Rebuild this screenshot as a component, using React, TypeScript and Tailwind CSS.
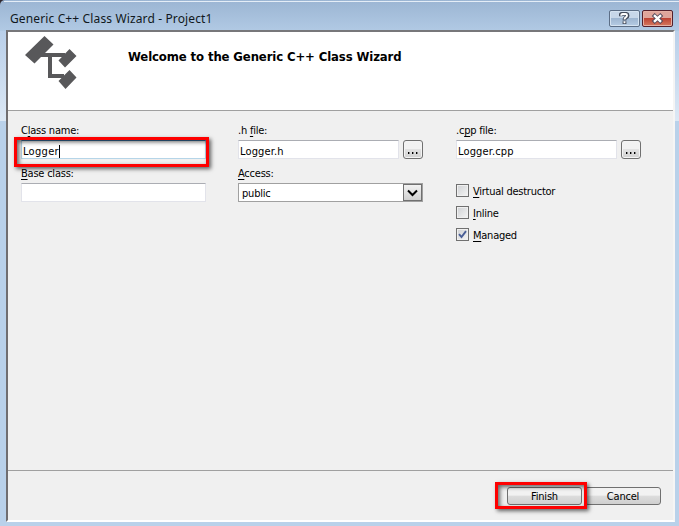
import type { ReactNode } from 'react';

function Label({ children }: { children: ReactNode }) {
  return <div className="h-[15px] whitespace-nowrap pt-px leading-[15px] tracking-[-0.22px]">{children}</div>;
}

function Key({ children }: { children: ReactNode }) {
  return <span className="underline decoration-1 underline-offset-[2px]">{children}</span>;
}

function Field({ width, children, focus }: { width: string; children?: ReactNode; focus?: boolean }) {
  return (
    <div
      className={`${width} ${focus ? 'border-[#b5d5e8] border-t-[#3d7bad]' : 'border-[#e2e3ea] border-t-[#abadb3]'} flex h-[19px] shrink-0 items-center whitespace-nowrap border bg-white pl-[1px] pt-[3px] leading-[15px] tracking-[0.15px]`}
    >
      {children}
    </div>
  );
}

function Browse() {
  return (
    <button className="flex h-[19px] w-[20px] shrink-0 items-center justify-center rounded-[3px] border border-[#707070] bg-linear-to-b from-[#f2f2f2] from-45% via-[#e2e2e2] via-50% to-[#d2d2d2] pt-[6px] shadow-[inset_0_0_0_1px_#f4f4f4]">
      <svg width="12" height="2" viewBox="0 0 12 2" shapeRendering="crispEdges">
        <path d="M1 0h1v2H1zM5 0h1v2H5zM9 0h1v2H9z" fill="#000" />
        <path d="M2 0h1v2H2zM6 0h1v2H6zM10 0h1v2h-1z" fill="#888" />
      </svg>
    </button>
  );
}

function Check({ children, checked }: { children: ReactNode; checked?: boolean }) {
  return (
    <div className="flex h-[22px] items-start gap-[4px]">
      <span className="flex size-[13px] items-center justify-center border border-[#707070] bg-linear-to-br from-[#cfd1d4] to-[#f5f5f5] shadow-[inset_0_0_0_1px_#f0f0f0]">
        {checked && (
          <svg width="9" height="9" viewBox="0 0 9 9" fill="none" stroke="#4a5f97" strokeWidth="1.9">
            <path d="M1 4.2 3.5 7 8 1.2" />
          </svg>
        )}
      </span>
      <span className="whitespace-nowrap leading-[15px] tracking-[-0.25px]">{children}</span>
    </div>
  );
}

export default function App() {
  return (
    <div className="h-[526px] w-[679px] overflow-hidden bg-[#30282f] font-['DejaVu_Sans_Condensed','DejaVu_Sans',sans-serif] text-[11px] tracking-[-0.2px] text-black [font-stretch:condensed]">
      <div className="relative flex h-[526px] flex-col rounded-tl-[5px] bg-linear-to-b from-[#9bb5d3] from-0% via-[#b9d1ea] via-8% to-[#b9d1ea] pl-[6px] pr-[4px] pt-px">
        <div className="absolute left-0 top-[31px] h-[90px] w-[6px] bg-linear-to-b from-[#b9cfe9] to-[#dce8f5]" />
        <div className="absolute right-0 top-[31px] h-[90px] w-[4px] bg-linear-to-b from-[#b9cfe9] to-[#dce8f5]" />
        <div className="absolute left-[4px] right-0 top-px h-px bg-[#e4edf7]" />
        <header className="flex h-[29px] shrink-0 items-start justify-between pl-[4px] pr-[2px]">
          <h1 className="mt-[9px] whitespace-nowrap font-['Noto_Sans',sans-serif] text-[12px] leading-[17px] tracking-[0.13px] text-[#101820]">
            Generic C++ Class Wizard - Project1
          </h1>
          <div className="mt-[9px] flex gap-[2px]">
            <button className="flex h-[17px] w-[31px] items-center justify-center rounded-[2px] border border-[#5c6e86] bg-linear-to-b from-[#c7d7e9] from-45% via-[#9eb6d1] via-50% to-[#b6cce4] shadow-[inset_0_0_0_1px_#d5e3f1]">
              <svg width="11" height="13" viewBox="0 0 11 13" fill="none" strokeLinejoin="round">
                <path d="M1.5 4.2V3Q2 1.8 3.4 1.8h3.2Q8.5 1.8 8.5 3.2v.9Q8.5 5 7 5.6 5.5 6.2 5.5 8.4M5.5 9.2v2.8" stroke="#444c5c" strokeWidth="3.8" />
                <path d="M2.2 3.8Q2.2 2 3.7 2h2.8Q8 2 8 3.3 8 4.8 6.8 5.3 5.5 6 5.5 7.6M5.5 9.2v2" stroke="#fff" strokeWidth="1.9" />
              </svg>
            </button>
            <button className="flex h-[17px] w-[31px] items-center justify-center rounded-[2px] border border-[#54202c] bg-linear-to-b from-[#dfa59b] from-45% via-[#bd4334] via-50% to-[#d5785f] shadow-[inset_0_0_0_1px_#e5b0a4]">
              <svg width="13" height="11" viewBox="0 0 13 11" fill="none">
                <path d="m2.2 1.5 8.6 8M10.8 1.5l-8.6 8" stroke="#53495a" strokeWidth="4.2" />
                <path d="m3 2.2 7 6.6M10 2.2 3 8.8" stroke="#fff" strokeWidth="2.4" />
              </svg>
            </button>
          </div>
        </header>

        <main className="flex h-[492px] w-[669px] shrink-0 flex-col border-2 border-b-[#ffffff] border-l-[#706e70] border-r-[#f5f5f5] border-t-[#77777a] bg-[#f0f0f0]">
          <section className="flex h-[79px] shrink-0 border-b border-[#a0a0a0] bg-white">
            <svg className="ml-[16px] mt-[3px] shrink-0" width="54" height="56" viewBox="0 0 54 56">
              <path d="M1 20 20.5 1 29.5 9.5 10.5 28.5ZM34.5 25.5 45.5 14 52.5 21 41 32.5ZM34.5 46 45.5 35 52.5 42.5 41.5 54Z" fill="#58585a" />
              <path d="M17 20H41M26 20V41H40" fill="none" stroke="#58585a" strokeWidth="4" />
            </svg>
            <h2 className="ml-[50px] mt-[17px] whitespace-nowrap text-[13px] font-bold leading-[16px] tracking-[-0.12px]">
              Welcome to the Generic C++ Class Wizard
            </h2>
          </section>

          <section className="grid h-[359px] shrink-0 grid-cols-[217px_218px_1fr] pl-[13px] pt-[11px]">
            <div>
              <Label>C<Key>l</Key>ass name:</Label>
              <div className="relative mt-[3px]">
                <Field width="w-[185px]" focus>
                  <span className="tracking-[0.3px]">Logger</span><span className="h-[13px] w-px bg-black" />
                </Field>
                <div className="absolute left-[-7px] top-[-3px] h-[30px] w-[195px] border-[3px] border-[#fe0000] shadow-[2px_2px_4px_#0009,inset_2px_2px_4px_#0009]" />
              </div>
              <div className="mt-[6px]"><Label><Key>B</Key>ase class:</Label></div>
              <div className="mt-[3px]"><Field width="w-[185px]" /></div>
            </div>
            <div>
              <Label>.h <Key>f</Key>ile:</Label>
              <div className="mt-[3px] flex gap-[4px]"><Field width="w-[161px]">Logger.h</Field><Browse /></div>
              <div className="mt-[6px]"><Label><Key>A</Key>ccess:</Label></div>
              <div className="mt-[3px] flex h-[19px] w-[185px] items-stretch justify-between border border-[#a0a0a0] bg-white">
                <span className="pl-[3px] pt-[2px] leading-[15px]">public</span>
                <button className="flex w-[19px] items-center justify-center border border-[#707070] bg-linear-to-b from-[#f2f2f2] to-[#d0d0d0]">
                  <svg width="11" height="8" viewBox="0 0 11 8" fill="none" stroke="#000" strokeWidth="2"><path d="m1 1.5 4.5 4.5L10 1.5" /></svg>
                </button>
              </div>
            </div>
            <div>
              <Label>.c<Key>p</Key>p file:</Label>
              <div className="mt-[3px] flex gap-[4px]"><Field width="w-[161px]">Logger.cpp</Field><Browse /></div>
              <div className="mt-[25px]">
                <Check><Key>V</Key>irtual destructor</Check>
                <Check><Key>I</Key>nline</Check>
                <Check checked><Key>M</Key>anaged</Check>
              </div>
            </div>
          </section>

          <footer className="flex flex-1 items-start justify-end gap-[3px] border-t border-[#a0a0a0] pr-[12px] pt-[16px]">
            <div className="relative">
              <button className="flex h-[18px] w-[75px] items-center justify-center rounded-[3px] border border-[#707070] bg-linear-to-b from-[#f2f2f2] from-45% via-[#dddddd] via-50% to-[#cfcfcf] pt-[2px]">Finish</button>
              <div className="absolute left-[-12px] top-[-5px] z-10 h-[27px] w-[92px] border-[3px] border-[#fe0000] shadow-[2px_2px_4px_#0009,inset_2px_2px_4px_#0009]" />
            </div>
            <button className="flex h-[18px] w-[76px] items-center justify-center rounded-[3px] border border-[#707070] bg-linear-to-b from-[#f2f2f2] from-45% via-[#dddddd] via-50% to-[#cfcfcf] pt-[2px]">Cancel</button>
          </footer>
        </main>
      </div>
    </div>
  );
}
